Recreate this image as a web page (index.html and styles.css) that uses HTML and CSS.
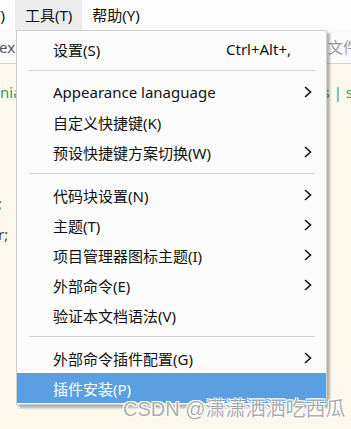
FILE: index.html
```html
<!DOCTYPE html>
<html>
<head>
<meta charset="utf-8">
<link rel="stylesheet" href="styles.css">
</head>
<body>
<div class="app">
  <div class="menubar">
    <span class="mb-item first">视图(V)</span>
    <span class="mb-item active">工具(T)</span>
    <span class="mb-item">帮助(Y)</span>
  </div>
  <div class="tabbar">
    <span class="tab-left">ex.</span>
    <span class="tab-right">文件</span>
  </div>
  <div class="editor">
    <div class="line l1"><span class="green">nia</span><span class="right green">s | s</span></div>
    <div class="line l2"><span class="code">;</span></div>
    <div class="line l3"><span class="code">r;</span></div>
  </div>

  <div class="dropdown">
    <div class="item"><span class="label">设置(S)</span><span class="shortcut">Ctrl+Alt+,</span><span class="arrow"></span></div>
    <div class="sep"></div>
    <div class="item"><span class="label">Appearance lanaguage</span><span class="arrow"><svg width="8" height="12" viewBox="0 0 8 12"><path d="M1 1 L6.5 6 L1 11" fill="none" stroke="#111" stroke-width="1.6"/></svg></span></div>
    <div class="item"><span class="label">自定义快捷键(K)</span><span class="arrow"></span></div>
    <div class="item"><span class="label">预设快捷键方案切换(W)</span><span class="arrow"><svg width="8" height="12" viewBox="0 0 8 12"><path d="M1 1 L6.5 6 L1 11" fill="none" stroke="#111" stroke-width="1.6"/></svg></span></div>
    <div class="sep"></div>
    <div class="item"><span class="label">代码块设置(N)</span><span class="arrow"><svg width="8" height="12" viewBox="0 0 8 12"><path d="M1 1 L6.5 6 L1 11" fill="none" stroke="#111" stroke-width="1.6"/></svg></span></div>
    <div class="item"><span class="label">主题(T)</span><span class="arrow"><svg width="8" height="12" viewBox="0 0 8 12"><path d="M1 1 L6.5 6 L1 11" fill="none" stroke="#111" stroke-width="1.6"/></svg></span></div>
    <div class="item"><span class="label">项目管理器图标主题(I)</span><span class="arrow"><svg width="8" height="12" viewBox="0 0 8 12"><path d="M1 1 L6.5 6 L1 11" fill="none" stroke="#111" stroke-width="1.6"/></svg></span></div>
    <div class="item"><span class="label">外部命令(E)</span><span class="arrow"><svg width="8" height="12" viewBox="0 0 8 12"><path d="M1 1 L6.5 6 L1 11" fill="none" stroke="#111" stroke-width="1.6"/></svg></span></div>
    <div class="item"><span class="label">验证本文档语法(V)</span><span class="arrow"></span></div>
    <div class="sep"></div>
    <div class="item"><span class="label">外部命令插件配置(G)</span><span class="arrow"><svg width="8" height="12" viewBox="0 0 8 12"><path d="M1 1 L6.5 6 L1 11" fill="none" stroke="#111" stroke-width="1.6"/></svg></span></div>
    <div class="item selected"><span class="label">插件安装(P)</span><span class="arrow"></span></div>
  </div>

  <div class="watermark">CSDN @潇潇洒洒吃西瓜</div>
</div>
</body>
</html>
```

FILE: styles.css
```css
html, body {
  margin: 0;
  padding: 0;
}
body {
  width: 351px;
  height: 429px;
  overflow: hidden;
  font-family: "Noto Sans", "Noto Sans CJK SC", sans-serif;
  font-size: 15px;
  color: #111;
  background: #fcf8ec;
}
.app {
  position: relative;
  width: 351px;
  height: 429px;
  overflow: hidden;
  display: flex;
  flex-direction: column;
}
.menubar {
  height: 30px;
  background: #fdfdfd;
  display: flex;
  align-items: stretch;
  flex: none;
}
.mb-item {
  display: flex;
  align-items: center;
  padding: 0 10px;
  white-space: nowrap;
  line-height: 30px;
}
.mb-item.first {
  margin-left: -53px;
}
.mb-item.active {
  background: #ececec;
}
.tabbar {
  flex: none;
  background: #fafafa;
  border-bottom: 1px solid #ddd6c2;
  display: flex;
  align-items: center;
  justify-content: space-between;
  color: #555;
  box-sizing: border-box;
  height: 34px;
}
.tab-left {
  margin-left: -1px;
}
.tab-right {
  color: #999;
  margin-right: -7px;
}
.editor {
  flex: 1;
  background: #fcf8ec;
  display: flex;
  flex-direction: column;
}
.line {
  display: flex;
  justify-content: space-between;
  height: 24px;
  line-height: 24px;
  white-space: nowrap;
}
.l1 {
  margin-top: 16px;
}
.l2 {
  margin-top: 87px;
}
.l3 {
  margin-top: 7px;
}
.green {
  color: #3d9a5c;
}
.right {
  margin-right: -2px;
}
.code {
  color: #444;
  margin-left: -2px;
}

.dropdown {
  position: absolute;
  left: 16px;
  top: 30px;
  width: 311px;
  box-sizing: border-box;
  background: #fcfcfc;
  border: 1px solid #cfcfcf;
  padding: 3px 0 1px 0;
  box-shadow: 3px 3px 2px rgba(0, 0, 0, 0.28);
}
.item {
  height: 30px;
  display: flex;
  align-items: center;
  padding-left: 36px;
  white-space: nowrap;
}
.item .label {
  flex: 1;
}
.item .shortcut {
  flex: none;
}
.item .arrow {
  flex: none;
  width: 35px;
  box-sizing: border-box;
  padding-left: 13px;
  display: flex;
  align-items: center;
}
.item.selected {
  background: #5a9fe2;
  color: #fff;
}
.sep {
  height: 13px;
  display: flex;
  align-items: center;
  margin: 0 11px 0 12px;
}
.sep::before {
  content: "";
  display: block;
  width: 100%;
  height: 1px;
  background: #d2d2d2;
}
.watermark {
  position: absolute;
  left: 123px;
  top: 397px;
  font-size: 20px;
  line-height: 24px;
  color: rgba(125, 125, 125, 0.65);
  white-space: nowrap;
  text-shadow: 1px 1px 0 #fff, -1px -1px 0 #fff, 1px -1px 0 #fff, -1px 1px 0 #fff;
  font-family: "Liberation Sans", "Noto Sans CJK SC", sans-serif;
}
```
